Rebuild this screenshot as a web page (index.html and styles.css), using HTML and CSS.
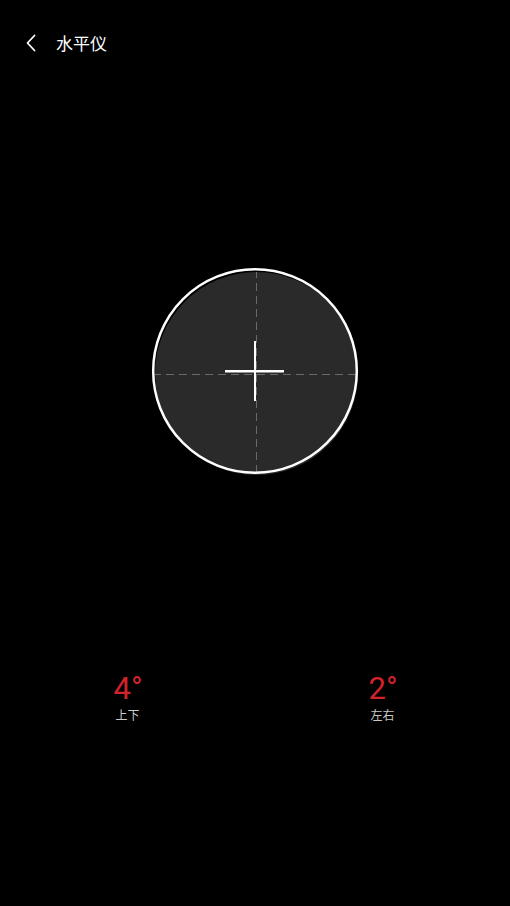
FILE: index.html
```html
<!DOCTYPE html>
<html lang="zh">
<head>
<meta charset="utf-8">
<title>水平仪</title>
<link rel="stylesheet" href="styles.css">
</head>
<body>
<div class="page">
  <header class="header">
    <svg class="back" width="16" height="20" viewBox="0 0 16 20">
      <polyline points="10.5,2.5 3.5,10 10.5,17.5" fill="none" stroke="#fff" stroke-width="1.8" stroke-linecap="round" stroke-linejoin="round"/>
    </svg>
    <span class="title">水平仪</span>
  </header>
  <div class="level">
    <svg width="210" height="210" viewBox="0 0 210 210">
      <defs>
        <clipPath id="disk"><circle cx="106.5" cy="107.5" r="101.5"/></clipPath>
      </defs>
      <circle cx="106.5" cy="107.5" r="101.5" fill="#2a2a2a"/>
      <g clip-path="url(#disk)" stroke="#6a6a6a" stroke-width="1" stroke-dasharray="8 5">
        <line x1="106.5" y1="4" x2="106.5" y2="212"/>
        <line x1="3" y1="108.5" x2="212" y2="108.5"/>
      </g>
      <circle cx="105" cy="105" r="101.8" fill="none" stroke="#fff" stroke-width="2.5"/>
      <rect x="75" y="104" width="59" height="2.5" fill="#fff"/>
      <rect x="104" y="75" width="2" height="60" fill="#fff"/>
    </svg>
  </div>
  <div class="readouts">
    <div class="readout">
      <div class="value">4°</div>
      <div class="label">上下</div>
    </div>
    <div class="readout">
      <div class="value">2°</div>
      <div class="label">左右</div>
    </div>
  </div>
</div>
</body>
</html>
```
FILE: styles.css
```css
html, body {
  margin: 0;
  padding: 0;
  background: #000;
}
body {
  width: 510px;
  height: 906px;
  overflow: hidden;
  font-family: "Noto Sans CJK SC", "Noto Sans", sans-serif;
}
.page {
  display: flex;
  flex-direction: column;
}
.header {
  height: 86px;
  display: flex;
  align-items: center;
  padding-left: 24px;
  box-sizing: border-box;
}
.back {
  display: block;
}
.title {
  margin-left: 16px;
  color: #fff;
  font-size: 17px;
  line-height: 24px;
}
.level {
  margin-top: 180px;
  display: flex;
  justify-content: center;
  height: 210px;
}
.level svg {
  display: block;
}
.readouts {
  margin-top: 196px;
  display: flex;
}
.readout {
  flex: 1;
  display: flex;
  flex-direction: column;
  align-items: center;
}
.value {
  color: #d2232b;
  font-family: Roboto, "Noto Sans", sans-serif;
  font-size: 31px;
  line-height: 34px;
  padding-left: 1px;
}
.label {
  margin-top: 1px;
  color: #c8c8c8;
  font-size: 12px;
  line-height: 16px;
}
```
